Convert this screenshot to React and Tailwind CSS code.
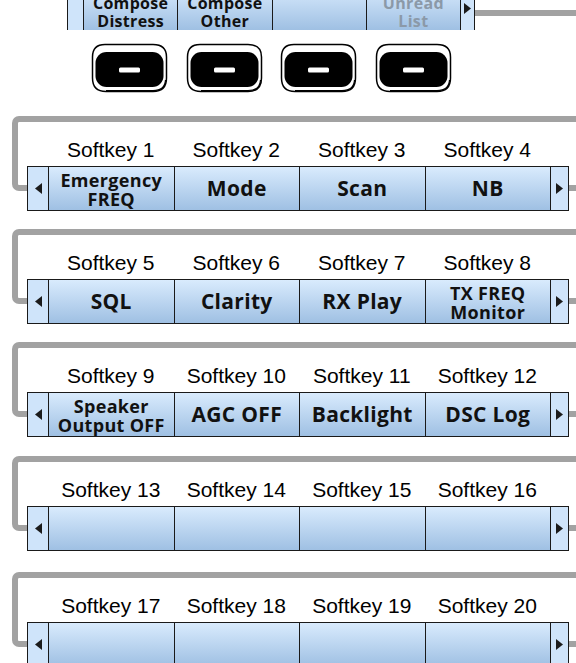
import React from "react";

const GRAY = "border-[#a2a2a2]";

function Arrow({ dir }) {
  return (
    <svg width="7" height="11" viewBox="0 0 7 11">
      <polygon points={dir === "left" ? "7,0 7,11 0,5.5" : "0,0 0,11 7,5.5"} fill="#1b1b1b" />
    </svg>
  );
}

function Cell({ children, muted }) {
  return (
    <div
      className={
        "flex items-center justify-center border-l border-[#1a1a1a] bg-linear-to-b from-[#d9ebfd] to-[#9fc0e3] text-center font-bold tracking-[0.02em] " +
        (muted ? "text-[#8b99a8]" : "text-[#111]")
      }
    >
      {children}
    </div>
  );
}

function Bar({ items, cols, leftArrow = true }) {
  return (
    <div className={`grid h-[45px] border border-[#1a1a1a] ${cols}`}>
      <div className="flex items-center justify-center bg-[#cfe4fa]">{leftArrow && <Arrow dir="left" />}</div>
      {items.map((it, i) => (
        <Cell key={i} muted={it.muted}>
          {it.text}
        </Cell>
      ))}
      <div className="flex items-center justify-center border-l border-[#1a1a1a] bg-[#cfe4fa]">
        <Arrow dir="right" />
      </div>
    </div>
  );
}

const one = (t) => ({ text: <span className="text-[21px] leading-none">{t}</span> });
const two = (a, b) => ({
  text: (
    <span className="pt-[2px] text-[18px] leading-[19px]">
      {a}
      <br />
      {b}
    </span>
  ),
});
const blank = { text: null };

function HwButton() {
  return (
    <svg width="77" height="50" viewBox="0 0 77 50">
      <path
        d="M14 1.5 H62 Q75.5 1.5 75.5 14 V35 Q75.5 48.5 62 48.5 H15 Q1.5 48.5 1.5 35 V14 Q1.5 1.5 14 1.5 Z"
        fill="white"
        stroke="black"
        strokeWidth="1.5"
      />
      <path d="M15 47.5 H62 Q74 47.5 74.5 37" fill="none" stroke="black" strokeWidth="1.2" />
      <rect x="4.5" y="9" width="68" height="35" rx="11" fill="black" />
      <rect x="28" y="24.5" width="21" height="5" rx="1.5" fill="white" />
    </svg>
  );
}

function Group({ labels, items, height }) {
  const cols = "grid-cols-[20px_repeat(4,1fr)_18px]";
  return (
    <div className={`relative ${height}`}>
      <div className={`absolute left-[12px] right-[-20px] top-0 h-[75px] rounded-l-[7px] border-[6px] border-r-0 ${GRAY}`} />
      <div className="relative pl-[27px] pr-[7px] pt-[22px]">
        <div className={`grid h-[23px] border-x border-transparent ${cols}`}>
          <div />
          {labels.map((l) => (
            <div key={l} className="text-center font-['Liberation_Sans',Arial,sans-serif] text-[21px] leading-[23px] text-black">
              {l}
            </div>
          ))}
          <div />
        </div>
        <div className="mt-[5px]">
          <Bar items={items} cols={cols} />
        </div>
      </div>
    </div>
  );
}

export default function App() {
  const topCols = "grid-cols-[15px_repeat(4,1fr)_14px]";
  const topText = (a, b) => (
    <span className="pt-[8px] text-[16px] leading-[18px]">
      {a}
      <br />
      {b}
    </span>
  );
  const top = [
    { text: topText("Compose", "Distress") },
    { text: topText("Compose", "Other") },
    blank,
    { muted: true, text: topText("Unread", "List") },
  ];

  const groups = [
    { labels: ["Softkey 1", "Softkey 2", "Softkey 3", "Softkey 4"], items: [two("Emergency", "FREQ"), one("Mode"), one("Scan"), one("NB")], height: "h-[113px]" },
    { labels: ["Softkey 5", "Softkey 6", "Softkey 7", "Softkey 8"], items: [one("SQL"), one("Clarity"), one("RX Play"), two("TX FREQ", "Monitor")], height: "h-[113px]" },
    { labels: ["Softkey 9", "Softkey 10", "Softkey 11", "Softkey 12"], items: [two("Speaker", "Output OFF"), one("AGC OFF"), one("Backlight"), one("DSC Log")], height: "h-[114px]" },
    { labels: ["Softkey 13", "Softkey 14", "Softkey 15", "Softkey 16"], items: [blank, blank, blank, blank], height: "h-[116px]" },
    { labels: ["Softkey 17", "Softkey 18", "Softkey 19", "Softkey 20"], items: [blank, blank, blank, blank], height: "h-[120px]" },
  ];

  return (
    <div className="h-[663px] w-[576px] overflow-hidden bg-white font-['Open_Sans',sans-serif]">
      {/* top softkey bar, cut off at the top edge */}
      <div className="mt-[-15px] flex items-start">
        <div className="ml-[67px] w-[408px]">
          <Bar items={top} cols={topCols} leftArrow={false} />
        </div>
        <div className="mt-[25px] h-[6px] flex-1 bg-[#a2a2a2]" />
      </div>

      <div className={`ml-[67px] mt-[13px] grid w-[408px] ${topCols}`}>
        <div />
        {[0, 1, 2, 3].map((i) => (
          <div key={i} className="flex justify-center">
            <HwButton />
          </div>
        ))}
        <div />
      </div>

      <div className="mt-[23px]">
        {groups.map((g) => (
          <Group key={g.labels[0]} {...g} />
        ))}
      </div>
    </div>
  );
}
